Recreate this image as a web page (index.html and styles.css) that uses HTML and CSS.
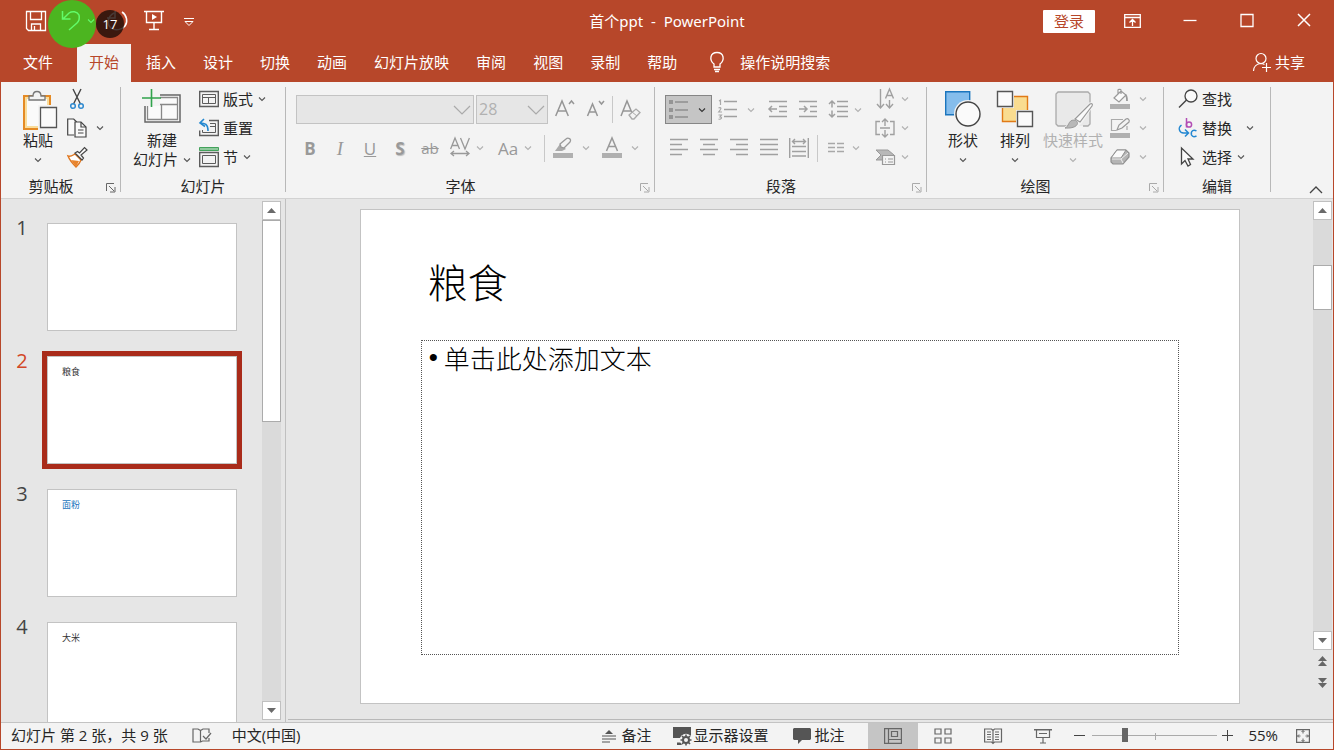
FILE: index.html
```html
<!DOCTYPE html>
<html lang="zh-CN">
<head>
<meta charset="utf-8">
<title>首个ppt - PowerPoint</title>
<link rel="stylesheet" href="styles.css">
</head>
<body>
<svg class="defs" aria-hidden="true">
  <symbol id="chev" viewBox="0 0 8 8"><path d="M1 2.500l3 3 3-3" fill="none" stroke="currentColor" stroke-width="1.1"/></symbol>
  <symbol id="launch" viewBox="0 0 10 10"><path d="M.5 8V.5H8M3 3l5 5M9 4v5H4" fill="none" stroke="currentColor"/></symbol>
  <symbol id="up" viewBox="0 0 9 5"><path d="M0 5L4.500 0 9 5z" fill="currentColor"/></symbol>
  <symbol id="down" viewBox="0 0 9 5"><path d="M0 0h9L4.500 5z" fill="currentColor"/></symbol>
</svg>
<div class="app">
  <header class="titlebar">
    <div class="quick">
      <button class="qbtn" aria-label="保存"><svg width="22" height="22" viewBox="0 0 22 22"><g fill="none" stroke="#fff" stroke-width="1.300"><path d="M1.500 1.500h19v19h-17l-2-2z"/><path d="M5.500 1.500v8h11v-8M6.500 20v-6h9v6M9.500 16v4"/></g></svg></button>
      <button class="qbtn undo" aria-label="撤消"><span class="pulse"></span><svg width="22" height="22" viewBox="0 0 22 22"><path d="M2.500 1v8h8M3 9l6-6c3-2 8-2 10 2 1 4 0 6-2 8l-8 7" fill="none" stroke="#62fb69" stroke-width="1.500"/></svg></button>
      <button class="qbtn more" aria-label="撤消选项"><svg class="chev"><use href="#chev"/></svg></button>
      <button class="qbtn redo" aria-label="恢复"><svg width="24" height="22" viewBox="0 0 24 22"><path d="M10 1v7H2M9 3C3 6 1 14 6 18c4 3 11 2 14-2s2-11-3-14" fill="none" stroke="#fff" stroke-width="1.500"/></svg><span class="count">17</span></button>
      <button class="qbtn" aria-label="从头开始"><svg width="20" height="22" viewBox="0 0 20 22"><g fill="none" stroke="#fff" stroke-width="1.400"><path d="M0 1.500h20M2.500 2v10.500h15V2M10 12v7M5 19.500h10"/></g><path d="M8 4v6l5-3z" fill="#fff"/></svg></button>
      <button class="qbtn custom" aria-label="自定义快速访问工具栏"><svg width="10" height="9" viewBox="0 0 10 9"><path d="M0 1.500h10M1 4.500h8L5 8.500z" fill="none" stroke="#fff"/></svg></button>
    </div>
    <h1 class="doc">首个ppt&nbsp; -&nbsp; PowerPoint</h1>
    <div class="window">
      <button class="login">登录</button>
      <button class="wbtn" aria-label="功能区显示选项"><svg width="17" height="14" viewBox="0 0 17 14"><path d="M.7.7h15.600v12.600H.7zM1 3.500h15M8.500 12V6M5.500 8.500l3-3 3 3" fill="none" stroke="#fff" stroke-width="1.300"/></svg></button>
      <button class="wbtn" aria-label="最小化"><svg width="14" height="14" viewBox="0 0 14 14"><path d="M.5 6.500h13" stroke="#fff" stroke-width="1.300"/></svg></button>
      <button class="wbtn" aria-label="最大化"><svg width="14" height="14" viewBox="0 0 14 14"><path d="M1 .5h12v12H1z" fill="none" stroke="#fff" stroke-width="1.300"/></svg></button>
      <button class="wbtn" aria-label="关闭"><svg width="14" height="14" viewBox="0 0 14 14"><path d="M1 0l12 12M13 0L1 12" stroke="#fff" stroke-width="1.500"/></svg></button>
    </div>
  </header>

  <nav class="tabs">
    <button class="tab file">文件</button>
    <button class="tab active">开始</button>
    <button class="tab">插入</button>
    <button class="tab">设计</button>
    <button class="tab">切换</button>
    <button class="tab">动画</button>
    <button class="tab">幻灯片放映</button>
    <button class="tab">审阅</button>
    <button class="tab">视图</button>
    <button class="tab">录制</button>
    <button class="tab">帮助</button>
    <button class="tab tell"><svg width="16" height="22" viewBox="0 0 16 22"><path d="M5 16v-3C0 9 1 1.500 8 1.500S16 9 11 13v3zM5 18.500h6M6 20.500h4" fill="none" stroke="#fff" stroke-width="1.300"/></svg>操作说明搜索</button>
    <button class="tab share"><svg width="20" height="20" viewBox="0 0 20 20"><g fill="none" stroke="#fff" stroke-width="1.200"><circle cx="9" cy="6.500" r="5"/><path d="M1.500 19c0-4 3-7 7-7.500 2 0 3 .5 4 1M14.500 11v9M10 15.500h9"/></g></svg>共享</button>
  </nav>

  <section class="ribbon">
    <div class="group g-clip">
      <div class="body">
        <button class="large"><svg width="40" height="46" viewBox="0 0 40 46"><path d="M6 11h26v33H6z" fill="#f9dc9a" stroke="#e58a24" stroke-width="2"/><path d="M9 14h20v27H9z" fill="#fafafa"/><path d="M11 15v-4h4c0-6 8-6 8 0h4v4z" fill="#f3f3f3" stroke="#777" stroke-width="1.300"/><path d="M20 20h21v26H20z" fill="#f3f3f3"/><path d="M22.500 22.500h16v20h-16z" fill="#fafafa" stroke="#555" stroke-width="1.300"/></svg><span>粘贴</span><span><svg class="chev"><use href="#chev"/></svg></span></button>
        <div class="stack">
          <button class="small" aria-label="剪切"><svg width="20" height="20" viewBox="0 0 20 20"><path d="M6 0l7.500 15M14 0L6.500 15" stroke="#444" stroke-width="1.400"/><g fill="none" stroke="#2f8ad0" stroke-width="1.500"><circle cx="6" cy="17" r="2.300"/><circle cx="14" cy="17" r="2.300"/></g></svg></button>
          <button class="small" aria-label="复制"><svg width="20" height="20" viewBox="0 0 20 20"><g fill="#fafafa" stroke="#444" stroke-width="1.200"><path d="M7 17H.7V1h6l3 3"/><path d="M8 4h6l5 5v10H8z"/><path d="M14 4v5h5M11 12h5.500M11 15h5.500" fill="none"/></g></svg><svg class="chev wide"><use href="#chev"/></svg></button>
          <button class="small" aria-label="格式刷"><svg width="20" height="20" viewBox="0 0 20 20"><path d="M1 9c3 1 5-1 7-2l6 6c-1 3-3 5-5 7-3-3-6-6-8-11z" fill="#fff" stroke="#e0771f" stroke-width="1.400"/><path d="M4 13l8 1-3 6z" fill="#e8842c"/><path d="M8 6l7 7 1.500-2-2.500-3 6-5-2.500-2.500-5 5.500-2-1.500z" fill="#fafafa" stroke="#444" stroke-width="1.200"/></svg></button>
        </div>
      </div>
      <div class="foot"><span>剪贴板</span><button class="launch" aria-label="剪贴板选项"><svg width="10" height="10"><use href="#launch"/></svg></button></div>
    </div>
    <div class="rule"></div>

    <div class="group g-slides">
      <div class="body">
        <button class="large"><svg width="40" height="46" viewBox="0 0 40 46"><path d="M3 10h35v27H3z" fill="#fafafa" stroke="#666" stroke-width="1.500"/><path d="M5.500 12.500h30v22h-30zM6 19.500h29M19.500 20v14" fill="none" stroke="#888" stroke-width="1.300"/><path d="M0 4h18v17H0z" fill="#f3f3f3"/><path d="M9.500 4v18M0 13h19" stroke="#31a34c" stroke-width="1.600"/></svg><span>新建</span><span>幻灯片<svg class="chev"><use href="#chev"/></svg></span></button>
        <div class="stack">
          <button class="small"><svg width="20" height="20" viewBox="0 0 20 20"><g fill="none" stroke="#5c5c5c"><path d="M.7 2.500h18.600v15H.7z" stroke-width="1.400"/><path d="M3.500 5.500h13v9h-13zM4 8.500h12M9.500 9v5"/></g></svg>版式<svg class="chev"><use href="#chev"/></svg></button>
          <button class="small"><svg width="20" height="20" viewBox="0 0 20 20"><g fill="none" stroke="#5c5c5c"><path d="M10 2.500h9.300v15H.7v-5" stroke-width="1.400"/><path d="M11 5.500h5.500v9h-13V12M11 8.500h5"/></g><path d="M5 1L1 5l5 3.500M1 5c5 0 8 1 8 8" fill="none" stroke="#2488d0" stroke-width="1.600"/></svg>重置</button>
          <button class="small"><svg width="20" height="20" viewBox="0 0 20 20"><path d="M.5.500h19v3H.5z" fill="#8fc99d" stroke="#43a25b"/><g fill="none" stroke="#5c5c5c"><path d="M.7 5.500h18.600v14H.7z" stroke-width="1.400"/><path d="M3.500 8.500h13v8h-13z"/></g></svg>节<svg class="chev"><use href="#chev"/></svg></button>
        </div>
      </div>
      <div class="foot"><span>幻灯片</span></div>
    </div>
    <div class="rule"></div>

    <div class="group g-font">
      <div class="body">
        <div class="rows">
          <div class="row first">
            <div class="combo family"><select aria-label="字体" disabled><option></option></select><svg width="18" height="10" viewBox="0 0 18 10"><path d="M1 1l8 8 8-8" fill="none" stroke="#aaa" stroke-width="1.200"/></svg></div>
            <div class="combo size"><select aria-label="字号" disabled><option>28</option></select><svg width="18" height="10" viewBox="0 0 18 10"><path d="M1 1l8 8 8-8" fill="none" stroke="#aaa" stroke-width="1.200"/></svg></div>
            <button class="tool" disabled aria-label="增大字号"><svg width="20" height="20" viewBox="0 0 20 20"><path d="M.7 16L7 1l6.300 15M3 11h8M14 4l2.500-3L19 4" fill="none" stroke="#969696" stroke-width="1.500"/></svg></button>
            <button class="tool" disabled aria-label="减小字号"><svg width="20" height="20" viewBox="0 0 20 20"><path d="M2.500 16l5-12 5 12M4 12h7M14 1l2.500 3L19 1" fill="none" stroke="#969696" stroke-width="1.500"/></svg></button>
            <div class="bar tight"></div>
            <button class="tool" disabled aria-label="清除格式"><svg width="20" height="20" viewBox="0 0 20 20"><path d="M1 16L7 1l5 12M3.500 11h7" fill="none" stroke="#969696" stroke-width="1.500"/><path d="M9 15l7-6 4 3.500-6 6.500h-2z" fill="#f3f3f3" stroke="#aaa" stroke-width="1.300"/><path d="M12 12l5 4" stroke="#aaa"/></svg></button>
          </div>
          <div class="row">
            <button class="tool" disabled><b>B</b></button>
            <button class="tool" disabled><i class="ital">I</i></button>
            <button class="tool" disabled><u>U</u></button>
            <button class="tool" disabled><b class="shade">S</b></button>
            <button class="tool" disabled><s>ab</s></button>
            <button class="tool" disabled aria-label="字符间距"><svg width="20" height="20" viewBox="0 0 20 20"><path d="M.6 11L5 0l4.500 11M2 7.500h6M10.500 0L15 11l4.400-11M1 15.500h18M4 13l-3 2.500L4 18M16 13l3 2.500-3 2.500" fill="none" stroke="#999" stroke-width="1.300"/></svg></button><svg class="chev n"><use href="#chev"/></svg>
            <button class="tool aa" disabled>Aa</button><svg class="chev n"><use href="#chev"/></svg>
            <div class="bar far"></div>
            <button class="tool" disabled aria-label="突出显示"><svg width="20" height="20" viewBox="0 0 20 20"><path d="M0 15h20v5H0z" fill="#b0b0b0"/><path d="M2 13l5-7 6 5-4 2z" fill="#aaa"/><path d="M7 6l6-5c2-2 6 0 4 3l-6 6-3-1z" fill="#f3f3f3" stroke="#999" stroke-width="1.300"/></svg></button><svg class="chev w"><use href="#chev"/></svg>
            <button class="tool after" disabled aria-label="字体颜色"><svg width="20" height="20" viewBox="0 0 20 20"><path d="M0 15h20v5H0z" fill="#b0b0b0"/><path d="M4.500 13L10 0l5.500 13M6.500 8.500h7" fill="none" stroke="#999" stroke-width="1.500"/></svg></button><svg class="chev w"><use href="#chev"/></svg>
          </div>
        </div>
      </div>
      <div class="foot"><span>字体</span><button class="launch dim" disabled aria-label="字体选项"><svg width="10" height="10"><use href="#launch"/></svg></button></div>
    </div>
    <div class="rule"></div>

    <div class="group g-para">
      <div class="body">
        <div class="rows">
          <div class="row first">
            <button class="bullets" aria-label="项目符号"><svg width="20" height="20" viewBox="0 0 20 20"><path d="M0 0h4v4H0zM0 8h4v4H0zM0 15h4v4H0z" fill="#949494"/><path d="M6 2h13M6 10h13M6 17h13" stroke="#8e8e8e" stroke-width="1.400"/></svg><svg class="chev"><use href="#chev"/></svg></button>
            <button class="tool" disabled aria-label="编号"><svg width="20" height="20" viewBox="0 0 20 20"><path d="M1 1l1.500-1v5M.5 8c2-1 3 0 2 1.500L.7 12H4M.5 15h3l-1.500 2c3 0 1 3-1.500 2" fill="none" stroke="#a8a8a8" stroke-width="1.200"/><path d="M6 1.500h13M6 9.500h13M6 16.500h13" stroke="#a0a0a0" stroke-width="1.500"/></svg></button><svg class="chev w"><use href="#chev"/></svg>
            <button class="tool after4" disabled aria-label="降低列表级别"><svg width="20" height="20" viewBox="0 0 20 20"><path d="M1 1.500h18M11 6.500h8M11 11.500h8M1 16.500h18M1 9h8M4 6L1 9l3 3" fill="none" stroke="#a0a0a0" stroke-width="1.500"/></svg></button>
            <button class="tool" disabled aria-label="提高列表级别"><svg width="20" height="20" viewBox="0 0 20 20"><path d="M1 1.500h18M12 6.500h7M12 11.500h7M1 16.500h18M1 9h8M6 6l3 3-3 3" fill="none" stroke="#a0a0a0" stroke-width="1.500"/></svg></button>
            <button class="tool" disabled aria-label="行距"><svg width="20" height="20" viewBox="0 0 20 20"><path d="M9 1.500h11M9 6.500h11M9 11.500h11M9 16.500h11M4 1v6.500M1 4l3-3 3 3M4 10.500V17M1 14l3 3 3-3" fill="none" stroke="#a0a0a0" stroke-width="1.500"/></svg></button><svg class="chev n"><use href="#chev"/></svg>
          </div>
          <div class="row">
            <button class="tool" disabled aria-label="左对齐"><svg width="20" height="20" viewBox="0 0 20 20"><path d="M1 1.500h18M1 6.500h12M1 11.500h18M1 16.500h12" stroke="#a0a0a0" stroke-width="1.500"/></svg></button>
            <button class="tool" disabled aria-label="居中"><svg width="20" height="20" viewBox="0 0 20 20"><path d="M1 1.500h18M4 6.500h12M1 11.500h18M4 16.500h12" stroke="#a0a0a0" stroke-width="1.500"/></svg></button>
            <button class="tool" disabled aria-label="右对齐"><svg width="20" height="20" viewBox="0 0 20 20"><path d="M1 1.500h18M7 6.500h12M1 11.500h18M7 16.500h12" stroke="#a0a0a0" stroke-width="1.500"/></svg></button>
            <button class="tool" disabled aria-label="两端对齐"><svg width="20" height="20" viewBox="0 0 20 20"><path d="M1 1.500h18M1 6.500h18M1 11.500h18M1 16.500h18" stroke="#a0a0a0" stroke-width="1.500"/></svg></button>
            <button class="tool" disabled aria-label="分散对齐"><svg width="20" height="20" viewBox="0 0 20 20"><path d="M.7 0v20M19.300 0v20M3 8.500h14M3 13.500h14M3 18h14M3.500 3.500h13M6 1L3.500 3.500 6 6M14 1l2.500 2.500L14 6" fill="none" stroke="#a0a0a0" stroke-width="1.400"/></svg></button>
            <div class="bar even"></div>
            <button class="tool" disabled aria-label="分栏"><svg width="20" height="20" viewBox="0 0 20 20"><path d="M2 5.500h7M11 5.500h7M2 9.500h7M11 9.500h7M2 13.500h7M11 13.500h7" stroke="#a8a8a8" stroke-width="1.300"/></svg></button><svg class="chev n"><use href="#chev"/></svg>
          </div>
        </div>
        <div class="stack end">
          <button class="small" disabled aria-label="文字方向"><svg width="20" height="20" viewBox="0 0 20 20"><path d="M5.500 0v18M2 15l3.500 4L9 15M14.500 11v7M11 15l3.500 4 3.500-4M10.500 9.500L14.500 0l4 9.500M12 6.500h5" fill="none" stroke="#a0a0a0" stroke-width="1.400"/></svg><svg class="chev"><use href="#chev"/></svg></button>
          <button class="small" disabled aria-label="对齐文本"><svg width="20" height="20" viewBox="0 0 20 20"><path d="M5 3.500H1v13h4M15 3.500h4v13h-4M5 10h10M10 1v7M7 4l3-3 3 3M10 12v7M7 16l3 3 3-3" fill="none" stroke="#a0a0a0" stroke-width="1.400"/></svg><svg class="chev"><use href="#chev"/></svg></button>
          <button class="small" disabled aria-label="转换为 SmartArt"><svg width="20" height="20" viewBox="0 0 20 20"><path d="M1 3h12l6 5-5 5H1l5-5z" fill="#b8b8b8" stroke="#999"/><path d="M7.500 8.500h12v9h-12z" fill="#f3f3f3" stroke="#999" stroke-width="1.200"/><path d="M10 12h1M13 12h5M10 15h1M13 15h5" stroke="#999"/></svg><svg class="chev"><use href="#chev"/></svg></button>
        </div>
      </div>
      <div class="foot"><span>段落</span><button class="launch dim" disabled aria-label="段落选项"><svg width="10" height="10"><use href="#launch"/></svg></button></div>
    </div>
    <div class="rule"></div>

    <div class="group g-draw">
      <div class="body">
        <button class="large"><svg width="40" height="46" viewBox="0 0 40 46"><path d="M2.700 6.700h24v23h-24z" fill="#85bdec" stroke="#1b75bd" stroke-width="1.400"/><circle cx="25" cy="29" r="14" fill="#f3f3f3"/><circle cx="25" cy="29" r="12" fill="#fafafa" stroke="#444" stroke-width="1.400"/></svg><span>形状</span><span><svg class="chev"><use href="#chev"/></svg></span></button>
        <button class="large gap12"><svg width="40" height="46" viewBox="0 0 40 46"><path d="M7.500 11.500h25v25h-25z" fill="#f9dc90" stroke="#e17a16" stroke-width="1.400"/><path d="M1 5h18v18H1zM21 25h18v18H21z" fill="#f3f3f3"/><path d="M2.500 6.500h15v15h-15zM22.500 26.500h15v15h-15z" fill="#fafafa" stroke="#555" stroke-width="1.400"/></svg><span>排列</span><span><svg class="chev"><use href="#chev"/></svg></span></button>
        <button class="large gap8" disabled><svg width="40" height="46" viewBox="0 0 40 46"><path d="M14 41H5l-2-2V9l2-2h30l2 2v30l-2 2h-5" fill="#e9e9e9" stroke="#aaa" stroke-width="1.300"/><path d="M21 33L37 17l4 3-12 18-7 6H9l5-4z" fill="#f3f3f3"/><path d="M22 34L37 19c2-1 3 0 2 2L27 37z" fill="#fafafa" stroke="#999" stroke-width="1.200"/><path d="M12 43c4-1 3-8 9-8 6 1 5 9-9 8z" fill="#b8b8b8" stroke="#999"/></svg><span>快速样式</span><span><svg class="chev"><use href="#chev"/></svg></span></button>
        <div class="stack gap7">
          <button class="small" disabled aria-label="形状填充"><svg width="20" height="20" viewBox="0 0 20 20"><path d="M0 15h20v5H0z" fill="#b0b0b0"/><path d="M4 9l7-7 5 4-7 7zM8 5V1c0-1 3-1 3 0v4" fill="#fafafa" stroke="#999" stroke-width="1.200"/><path d="M15 6c2 0 2 3 2 6" fill="none" stroke="#999" stroke-width="1.800"/></svg><svg class="chev"><use href="#chev"/></svg></button>
          <button class="small" disabled aria-label="形状轮廓"><svg width="20" height="20" viewBox="0 0 20 20"><path d="M0 15h20v5H0z" fill="#b0b0b0"/><path d="M13 1.500H1.500v11H6M17 8v4" fill="none" stroke="#aaa" stroke-width="1.200"/><path d="M7 12l2-5 7-6c2-1 4 1 3 3l-7 6z" fill="#f3f3f3" stroke="#999" stroke-width="1.200"/></svg><svg class="chev"><use href="#chev"/></svg></button>
          <button class="small" disabled aria-label="形状效果"><svg width="20" height="20" viewBox="0 0 20 20"><path d="M1 11l6-8h9l3 3v4l-6 7H3l-2-2z" fill="#b4b4b4" stroke="#909090" stroke-width="1.200"/><path d="M1 11l6-8h9l-5 8z" fill="#fafafa" stroke="#909090"/><path d="M2 12h9l2 4M11 12l7-6" fill="none" stroke="#eee"/></svg><svg class="chev"><use href="#chev"/></svg></button>
        </div>
      </div>
      <div class="foot"><span>绘图</span><button class="launch dim" disabled aria-label="绘图选项"><svg width="10" height="10"><use href="#launch"/></svg></button></div>
    </div>
    <div class="rule"></div>

    <div class="group g-edit">
      <div class="body">
        <div class="stack">
          <button class="small"><svg width="20" height="20" viewBox="0 0 20 20"><circle cx="13" cy="7" r="6" fill="#fafafa" stroke="#444" stroke-width="1.300"/><path d="M8.500 11L1 18.500" stroke="#444" stroke-width="1.500"/></svg>查找</button>
          <button class="small"><svg width="20" height="20" viewBox="0 0 20 20"><g fill="none" stroke-width="1.500"><path d="M8.500 0v9.500" stroke="#b24db5"/><circle cx="11" cy="6.500" r="2.600" stroke="#b24db5"/><path d="M3.500 7c-4 3-2 8 2 8h4M7 11.500l3.500 3.500L7 18.500M18.500 13c-3-2-6 0-5 4 1 2 3 2 5 1" stroke="#2387d1"/></g></svg>替换<svg class="chev wide"><use href="#chev"/></svg></button>
          <button class="small"><svg width="20" height="20" viewBox="0 0 20 20"><path d="M3.500 1v16l3.500-3.500 3 5.500 2.500-1.500L10 12h5z" fill="#fafafa" stroke="#444" stroke-width="1.300"/></svg>选择<svg class="chev"><use href="#chev"/></svg></button>
        </div>
      </div>
      <div class="foot"><span>编辑</span></div>
    </div>
    <div class="rule"></div>
    <button class="collapse" aria-label="折叠功能区"><svg width="14" height="8" viewBox="0 0 14 8"><path d="M1 7l6-6 6 6" fill="none" stroke="#444" stroke-width="1.300"/></svg></button>
  </section>

  <main class="work">
    <aside class="panel">
      <ol class="thumbs">
        <li><span class="num">1</span><div class="thumb"></div></li>
        <li class="current"><span class="num">2</span><div class="thumb">粮食</div></li>
        <li><span class="num">3</span><div class="thumb blue">面粉</div></li>
        <li><span class="num">4</span><div class="thumb">大米</div></li>
      </ol>
      <div class="scroll">
        <button class="arrow" aria-label="向上"><svg width="9" height="5"><use href="#up"/></svg></button>
        <div class="track"><div class="grip long"></div></div>
        <button class="arrow" aria-label="向下"><svg width="9" height="5"><use href="#down"/></svg></button>
      </div>
    </aside>
    <section class="stage">
      <div class="canvas">
        <article class="slide">
          <h2>粮食</h2>
          <ul class="holder"><li>单击此处添加文本</li></ul>
        </article>
      </div>
      <div class="scroll right">
        <button class="arrow" aria-label="向上"><svg width="9" height="5"><use href="#up"/></svg></button>
        <div class="track"><div class="grip short"></div></div>
        <button class="arrow" aria-label="向下"><svg width="9" height="5"><use href="#down"/></svg></button>
        <button class="jump" aria-label="上一张幻灯片"><svg width="9" height="5"><use href="#up"/></svg><svg width="9" height="5"><use href="#up"/></svg></button>
        <button class="jump" aria-label="下一张幻灯片"><svg width="9" height="5"><use href="#down"/></svg><svg width="9" height="5"><use href="#down"/></svg></button>
      </div>
    </section>
  </main>

  <footer class="status">
    <span class="pos">幻灯片 第 2 张，共 9 张</span>
    <button class="sbtn spell" aria-label="拼写检查"><svg width="20" height="16" viewBox="0 0 20 16"><path d="M8.500 2.500V14M8.500 14H1V1h5l2.500 1.500L11 1h6v4M8.500 14l2-1h6.500v-3M11 8l3 3 5-6" fill="none" stroke="#666" stroke-width="1.200"/></svg></button>
    <button class="sbtn lang">中文(中国)</button>
    <div class="right-tools">
      <button class="sbtn notes"><svg width="14" height="14" viewBox="0 0 14 14"><path d="M3 5l4-4 4 4z" fill="#555"/><path d="M0 7h14M0 10h14M0 13h8" stroke="#555" stroke-width="1.200"/></svg>备注</button>
      <button class="sbtn display"><svg width="20" height="20" viewBox="0 0 20 20"><path d="M1 1h18v11H1zM5 16.500h5V19H5z" fill="#555"/><circle cx="14" cy="14" r="6.200" fill="#f3f3f3"/><circle cx="14" cy="14" r="3" fill="none" stroke="#555" stroke-width="2"/><path d="M14 8.500v2M14 17.500v2M8.500 14h2M17.500 14h2M10 10l1.500 1.500M16.500 16.500L18 18M18 10l-1.500 1.500M10 18l1.500-1.500" stroke="#555" stroke-width="1.600"/></svg>显示器设置</button>
      <button class="sbtn comment"><svg width="18" height="16" viewBox="0 0 18 16"><path d="M1 0h16l1 1v10l-1 1H9l-4 4v-4H1l-1-1V1z" fill="#555"/></svg>批注</button>
      <div class="views">
        <button class="view on" aria-label="普通视图"><svg width="18" height="16" viewBox="0 0 18 16"><path d="M.6.600h16.800v14.800H.6zM4.500 1v14M5 11.500h12M7.500 3.500h6v5h-6z" fill="none" stroke="#666" stroke-width="1.200"/></svg></button>
        <button class="view" aria-label="幻灯片浏览"><svg width="18" height="16" viewBox="0 0 18 16"><path d="M1 1h6v5H1zM11 1h6v5h-6zM1 10h6v5H1zM11 10h6v5h-6z" fill="none" stroke="#666" stroke-width="1.200"/></svg></button>
        <button class="view" aria-label="阅读视图"><svg width="18" height="16" viewBox="0 0 18 16"><path d="M9 2.500L7.500 1H.6v13h7L9 15.500l1.500-1.500h7V1h-7zV15M3 4h4M3 6.500h4M3 9h4M3 11.500h4M11 4h4M11 6.500h4M11 9h4M11 11.500h4" fill="none" stroke="#666" stroke-width="1.200"/></svg></button>
        <button class="view" aria-label="幻灯片放映"><svg width="18" height="16" viewBox="0 0 18 16"><path d="M0 1h18v1.500H0z" fill="#666"/><path d="M2.500 2v7.500h13V2M5 5.500h8M9 9.500V15M6 15h6" fill="none" stroke="#666" stroke-width="1.200"/></svg></button>
      </div>
      <button class="zoombtn" aria-label="缩小"><svg width="11" height="11" viewBox="0 0 11 11"><path d="M0 5.500h11" stroke="#444"/></svg></button>
      <div class="slider"><input type="range" min="0" max="100" value="25" aria-label="缩放"></div>
      <button class="zoombtn plus" aria-label="放大"><svg width="11" height="11" viewBox="0 0 11 11"><path d="M0 5.500h11M5.500 0v11" stroke="#444"/></svg></button>
      <button class="sbtn pct">55%</button>
      <button class="sbtn fit" aria-label="适应窗口"><svg width="14" height="14" viewBox="0 0 14 14"><path d="M.6.600h12.800v12.800H.6z" fill="none" stroke="#666" stroke-width="1.200"/><path d="M7 1.500v3M5.500 3L7 1.500 8.500 3M7 12.500v-3M5.500 11L7 12.500 8.500 11M1.500 7h3M3 5.500L1.500 7 3 8.500M12.500 7h-3M11 5.500L12.500 7 11 8.500" fill="none" stroke="#666"/></svg></button>
    </div>
  </footer>
</div>
</body>
</html>
```

FILE: styles.css
```css
* { box-sizing: border-box; }
body {
  margin: 0;
  font: 15px/19px "Open Sans", "Noto Sans CJK SC", sans-serif;
  color: #262626;
}
button {
  margin: 0; padding: 0; border: 0; background: none;
  font: inherit; color: inherit; white-space: nowrap;
}
svg { display: block; flex: none; overflow: visible; }
.defs { position: absolute; width: 0; height: 0; }
.app {
  display: flex; flex-direction: column;
  height: 100vh; overflow: hidden;
  border: 1px solid #b7472a; border-top: 0;
  background: #e6e6e6;
}
.chev { width: 8px; height: 8px; color: #555; }

/* title bar */
.titlebar {
  display: grid; grid-template-columns: 1fr auto 1fr; align-items: center;
  height: 44px; padding-bottom: 2px; background: #b7472a; color: #fff;
}
.quick { display: flex; align-items: center; padding-left: 24px; }
.qbtn { position: relative; }
.undo { margin-left: 13px; }
.undo svg { position: relative; }
.pulse {
  position: absolute; left: -12px; top: -10px;
  width: 48px; height: 48px; border-radius: 50%; background: #4cb520;
}
.more { margin-left: 5px; }
.more .chev { color: #62fb69; }
.redo { margin-left: 10px; }
.count {
  position: absolute; left: -9px; top: 0;
  width: 28px; height: 28px; border-radius: 50%;
  background: rgba(30, 13, 8, 0.82);
  font-size: 13px; line-height: 28px; text-align: center;
}
.qbtn.redo + .qbtn { margin-left: 15px; }
.custom { padding-left: 20px; }
.doc { margin: 0; font: 400 15px/19px "Noto Sans", "Noto Sans CJK SC", sans-serif; }
.window { display: flex; align-items: center; justify-content: flex-end; padding-right: 1px; }
.login {
  width: 52px; height: 23px; margin-right: 9px;
  background: #fff; color: #b7472a; line-height: 21px; border-radius: 1px;
}
.wbtn { display: flex; align-items: center; justify-content: center; width: 57px; height: 40px; }

/* tabs */
.tabs {
  display: flex; gap: 3px; height: 38px; flex: none;
  padding: 0 24px 0 10px; background: #b7472a; color: #fff;
}
.tab { display: flex; align-items: center; padding: 0 12px 2px; }
.file { margin-right: 9px; }
.active { background: #f3f3f3; color: #b7472a; }
.tell { gap: 15px; margin-left: 5px; }
.share { gap: 3px; margin-left: auto; padding-right: 4px; }

/* ribbon */
.ribbon {
  display: flex; flex: none; height: 117px;
  background: #f3f3f3; border-bottom: 1px solid #d2d2d2;
}
.rule { width: 1px; margin: 5px 0 6px; background: #b8b8b8; }
.group { display: flex; flex-direction: column; }
.body { display: flex; height: 94px; padding-top: 3px; align-items: flex-start; }
.foot { display: flex; align-items: center; height: 20px; }
.foot span { flex: 1; text-align: center; }
.launch { width: 19px; padding: 4px 0 0 5px; color: #666; }
.launch.dim { color: #aaa; }
.g-clip { width: 119px; }
.g-clip .body { padding-left: 17px; }
.g-clip .stack { margin-left: 9px; }
.g-slides { width: 164px; }
.g-slides .body { padding-left: 12px; }
.g-slides .stack { margin-left: 8px; }
.g-font { width: 368px; }
.g-font .body, .g-para .body { padding-left: 9px; }
.g-para { width: 271px; }
.g-draw { width: 236px; }
.g-draw .body { padding-left: 16px; }
.g-edit { width: 106px; }
.g-edit .body { padding-left: 14px; }
.large { display: flex; flex-direction: column; align-items: center; }
.large span { display: flex; align-items: center; justify-content: center; gap: 5px; height: 19px; min-width: 40px; }
.gap12 { margin-left: 12px; }
.gap8 { margin-left: 8px; }
.gap7 { margin-left: 7px; }
button:disabled { color: #b1b1b1; }
button:disabled .chev, .row > .chev { color: #b1b1b1; }
.stack { display: flex; flex-direction: column; }
.stack.end { margin-left: auto; padding-right: 17px; }
.small { display: flex; align-items: center; gap: 4px; height: 29px; padding-bottom: 1px; }
.small .chev { margin-left: 1px; }
.small .chev.wide { margin-left: 10px; }
.stack.end .small .chev { margin-left: 2px; }
.g-clip .small .chev.wide, .g-draw .small .chev { margin-left: 5px; }
.rows { display: flex; flex-direction: column; gap: 10px; padding-top: 10px; }
.row { display: flex; align-items: center; height: 28px; }
.row.first { height: 29px; padding-left: 1px; }
.tool { display: flex; align-items: center; justify-content: center; width: 30px; height: 28px; font-size: 17px; }
.tool:disabled { color: #999; }
.tool s { font-size: 15px; }
.aa { margin-left: 8px; font-size: 17px; }
.ital { font-family: "Liberation Serif", serif; font-size: 19px; }
.shade { text-shadow: 1px 1px 1px #bbb; }
.row .chev.n { width: 10px; }
.row .chev.w { width: 16px; }
.after { margin-left: 3px; }
.after4 { margin-left: 4px; }
.bar { width: 1px; height: 27px; background: #c8c8c8; }
.tight { margin: 0 2px; }
.even { margin: 0 3px; }
.far { margin: 0 3px 0 11px; }
.combo { display: grid; align-items: center; height: 29px; margin-right: 2px; }
.combo select, .combo svg { grid-area: 1 / 1; }
.combo svg { justify-self: end; margin-right: 3px; pointer-events: none; }
.combo select {
  appearance: none; width: 100%; height: 29px; padding: 0 2px;
  border: 1px solid #c3c3c3; border-radius: 0; background: #e6e6e6;
  font: inherit; font-size: 16px; color: #b1b1b1; opacity: 1;
}
.family { width: 178px; }
.size { width: 72px; }
.bullets {
  display: flex; align-items: center; gap: 9px;
  width: 47px; height: 29px; padding-left: 3px; margin-right: 1px;
  border: 1px solid #868686; background: #c5c5c5;
}
.bullets .chev { color: #333; }
.collapse { align-self: flex-end; margin: 0 10px 4px auto; }

/* workspace */
.work { display: flex; flex: 1; min-height: 0; }
.panel {
  display: flex; flex: none; width: 285px;
  border-right: 1px solid #c0c0c0; padding-right: 4px;
}
.thumbs { flex: 1; min-width: 0; overflow: hidden; margin: 0; padding: 17px 0 0 10px; list-style: none; }
.thumbs li { display: flex; height: 133px; }
.num { width: 22px; margin-right: 14px; text-align: center; font-size: 20px; line-height: 24px; color: #444; }
.thumb {
  width: 190px; height: 108px; margin-top: 7px; padding: 5px 14px;
  border: 1px solid #c3c3c3; background: #fff; font-size: 9px; color: #333;
}
.blue { color: #1b75bd; }
.current .num { color: #d24726; }
.current .thumb { box-shadow: 0 0 0 5px #a92b1a; }
.scroll { display: flex; flex-direction: column; flex: none; width: 19px; padding: 2px 0; }
.arrow {
  display: flex; align-items: center; justify-content: center;
  height: 19px; border: 1px solid #c0c0c0; background: #fff; color: #6a6a6a;
}
.track { flex: 1; background: #dadada; }
.grip { border: 1px solid #ababab; background: #fff; }
.long { height: 42%; }
.right .track { display: flex; flex-direction: column; }
.right .track::before { content: ""; height: 11%; }
.short { height: 11%; }
.stage { display: flex; flex: 1; min-width: 0; margin: 0 0 2px 2px; border-bottom: 1px solid #b8b8b8; }
.canvas { flex: 1; min-width: 0; padding: 10px 1px 0 0; }
.slide {
  display: flex; flex-direction: column;
  width: 86%; aspect-ratio: 16 / 9; margin: 0 auto;
  padding: 42px 60px 48px; border: 1px solid #c3c3c3; background: #fff; color: #000;
  font-family: "Noto Sans CJK SC", sans-serif; font-weight: 300;
}
.slide h2 { margin: 0 0 30px; padding-left: 7px; font-size: 40px; line-height: 58px; font-weight: 300; }
.holder { flex: 1; margin: 0; padding: 0 7px; list-style: none; border: 1px dotted #555; font-size: 26px; line-height: 33px; }
.holder li { display: flex; }
.holder li::before { content: "•"; width: 15px; font-family: "Liberation Sans", sans-serif; }
.right { margin-right: 1px; padding-bottom: 31px; }
.jump { display: flex; flex-direction: column; align-items: center; margin-top: 6px; color: #666; }
.jump + .jump { margin-top: 12px; }

/* status bar */
.status {
  display: flex; align-items: center; flex: none; height: 27px;
  padding: 0 0 1px 10px; border-top: 1px solid #c3c3c3; background: #f3f3f3;
}
.sbtn { display: flex; align-items: center; height: 25px; }
.spell { margin-left: 24px; }
.lang { margin-left: 20px; }
.right-tools { display: flex; align-items: center; margin-left: auto; }
.notes { gap: 5px; }
.display { gap: 1px; margin-left: 21px; }
.comment { gap: 3px; margin-left: 25px; }
.views { display: flex; margin: 0 6px 0 24px; }
.view { display: flex; align-items: center; justify-content: center; width: 50px; height: 26px; }
.on { background: #c5c5c5; }
.zoombtn { width: 12px; }
.slider { position: relative; width: 125px; margin: 0 5px 0 6px; height: 14px; }
.slider::before {
  content: ""; position: absolute; left: 50%; top: 4px;
  width: 1px; height: 7px; background: #aaa;
}
.slider input { position: relative; appearance: none; display: block; width: 100%; height: 14px; margin: 0; background: none; }
.slider input::-webkit-slider-runnable-track { height: 1px; background: #aaa; }
.slider input::-webkit-slider-thumb { appearance: none; width: 6px; height: 14px; margin-top: -7px; background: #666; }
.pct { margin-left: 14px; }
.fit { margin: 0 23px 0 18px; }
```
